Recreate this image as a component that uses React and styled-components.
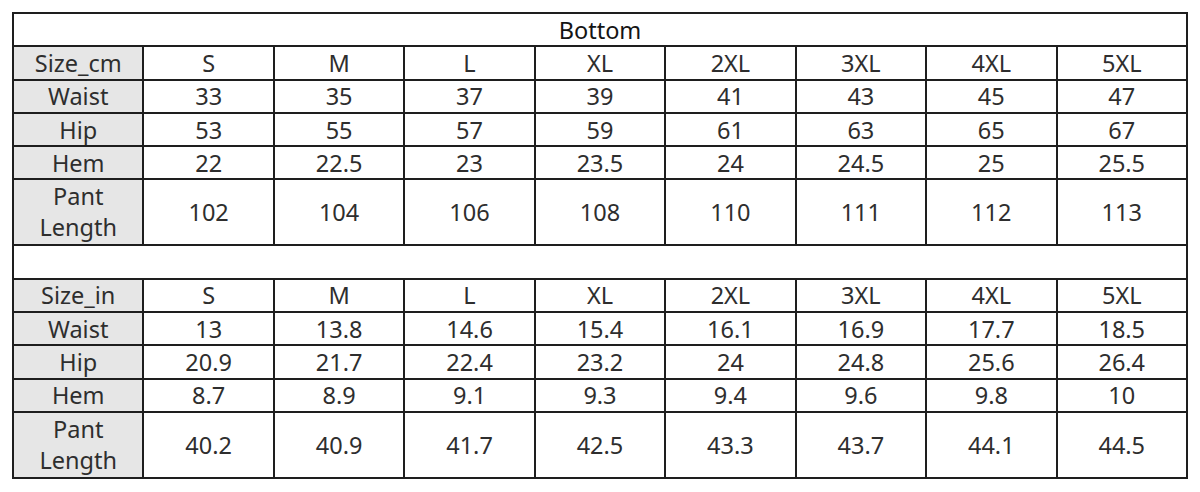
import React from "react";
import styled, { createGlobalStyle } from "styled-components";

const GlobalStyle = createGlobalStyle`
  html, body {
    margin: 0;
    padding: 0;
    background: #fff;
  }
  body {
    font-family: "Noto Sans", "Open Sans", sans-serif;
  }
`;

const Page = styled.div`
  padding: 12px 0 0 12px;
`;

const Table = styled.table`
  width: 1176px;
  border-collapse: collapse;
  table-layout: fixed;
  border: 2px solid #1e1e1e;
  color: #2e2e2e;
  font-size: 23.5px;
`;

const Row = styled.tr`
  height: ${({ $tall }) => ($tall ? "66px" : "33.3px")};
`;

const Cell = styled.td`
  border: 2px solid #1e1e1e;
  padding: 0;
  text-align: center;
  vertical-align: middle;
  line-height: ${({ $double }) => ($double ? "31px" : "28px")};
  white-space: nowrap;
  background: ${({ $label }) => ($label ? "#e6e6e6" : "#fff")};
`;

const TitleCell = styled(Cell)`
  color: #141414;
  background: #fff;
`;

const sizes = ["S", "M", "L", "XL", "2XL", "3XL", "4XL", "5XL"];

const cmRows = [
  ["Waist", [33, 35, 37, 39, 41, 43, 45, 47]],
  ["Hip", [53, 55, 57, 59, 61, 63, 65, 67]],
  ["Hem", [22, 22.5, 23, 23.5, 24, 24.5, 25, 25.5]],
];
const cmLength = [102, 104, 106, 108, 110, 111, 112, 113];

const inRows = [
  ["Waist", [13, 13.8, 14.6, 15.4, 16.1, 16.9, 17.7, 18.5]],
  ["Hip", [20.9, 21.7, 22.4, 23.2, 24, 24.8, 25.6, 26.4]],
  ["Hem", [8.7, 8.9, 9.1, 9.3, 9.4, 9.6, 9.8, 10]],
];
const inLength = [40.2, 40.9, 41.7, 42.5, 43.3, 43.7, 44.1, 44.5];

const SizeBlock = ({ unit, rows, length }) => (
  <>
    <Row>
      <Cell $label>{`Size_${unit}`}</Cell>
      {sizes.map((s) => (
        <Cell key={s}>{s}</Cell>
      ))}
    </Row>
    {rows.map(([name, values]) => (
      <Row key={name}>
        <Cell $label>{name}</Cell>
        {values.map((v, i) => (
          <Cell key={i}>{v}</Cell>
        ))}
      </Row>
    ))}
    <Row $tall>
      <Cell $label $double>
        Pant
        <br />
        Length
      </Cell>
      {length.map((v, i) => (
        <Cell key={i}>{v}</Cell>
      ))}
    </Row>
  </>
);

const App = () => (
  <Page>
    <GlobalStyle />
    <Table>
      <tbody>
        <Row>
          <TitleCell colSpan={9}>Bottom</TitleCell>
        </Row>
        <SizeBlock unit="cm" rows={cmRows} length={cmLength} />
        <Row>
          <Cell colSpan={9} />
        </Row>
        <SizeBlock unit="in" rows={inRows} length={inLength} />
      </tbody>
    </Table>
  </Page>
);

export default App;
